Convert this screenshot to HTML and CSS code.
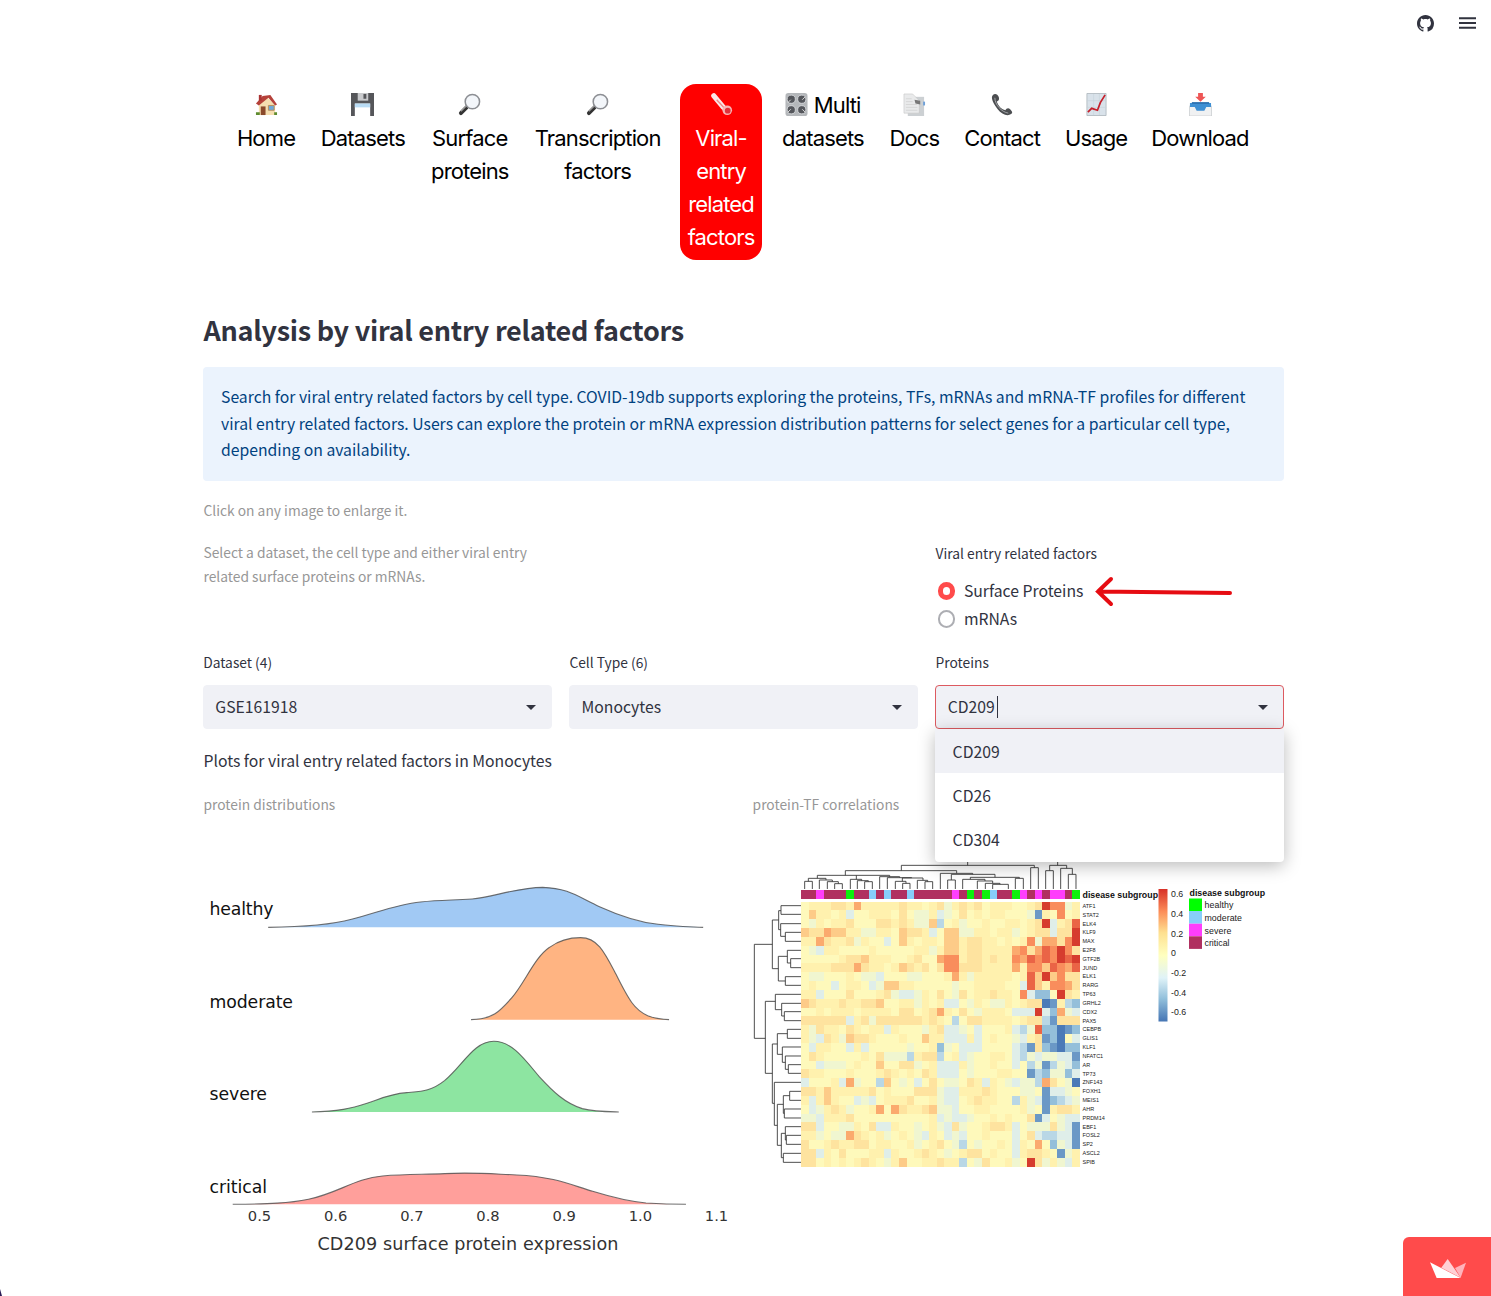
FILE: index.html
```html
<!DOCTYPE html>
<html lang="en">
<head>
<meta charset="utf-8">
<title>COVID-19db</title>
<link rel="stylesheet" href="styles.css">
</head>
<body>
<header class="toolbar">
  <svg class="github" viewBox="0 0 16 16"><path d="M8 0C3.58 0 0 3.58 0 8c0 3.54 2.29 6.53 5.47 7.59.4.07.55-.17.55-.38 0-.19-.01-.82-.01-1.49-2.01.37-2.53-.49-2.69-.94-.09-.23-.48-.94-.82-1.13-.28-.15-.68-.52-.01-.53.63-.01 1.08.58 1.23.82.72 1.21 1.87.87 2.33.66.07-.52.28-.87.51-1.07-1.78-.2-3.64-.89-3.64-3.95 0-.87.31-1.59.82-2.15-.08-.2-.36-1.02.08-2.12 0 0 .67-.21 2.2.82.64-.18 1.32-.27 2-.27s1.36.09 2 .27c1.53-1.04 2.2-.82 2.2-.82.44 1.1.16 1.92.08 2.12.51.56.82 1.27.82 2.15 0 3.07-1.87 3.75-3.65 3.95.29.25.54.73.54 1.48 0 1.07-.01 1.93-.01 2.2 0 .21.15.46.55.38A8.01 8.01 0 0 0 16 8c0-4.42-3.58-8-8-8z"/></svg>
  <svg class="burger" viewBox="0 0 18 12"><path d="M0 0h18v2H0zM0 5h18v2H0zM0 10h18v2H0z"/></svg>
</header>

<nav class="nav">
  <a class="item"><svg class="emoji" viewBox="0 0 24 24"><path fill="#f5deb0" d="M4 11l8-7 9 8v11H4z"/><path fill="#b5413a" d="M1 11L8 3l8-1 7 10-2 1-7-8-10 8z"/><path fill="#a33" d="M4 2h3v6H4z"/><path fill="#8b4a2b" d="M6 14h5v9H6z"/><path fill="#6fa9d8" stroke="#b98d5b" d="M14 13h6v5h-6z"/><path fill="#5e8c2f" d="M1 20h4v3H1zM20 20h3v3h-3z"/></svg><br>Home</a>
  <a class="item"><svg class="emoji" viewBox="0 0 24 24"><path fill="#55565a" d="M0 0h24v24H0z"/><path fill="#c9cacd" d="M7 0h11v8H7z"/><path fill="#55565a" d="M13 1h3v5h-3z"/><path fill="#fff" d="M4 11h16v13H4z"/><path fill="#b9dcf5" d="M4 11h16v4H4z"/></svg><br>Datasets</a>
  <a class="item"><svg class="emoji" viewBox="0 0 24 24"><path stroke="#333" stroke-width="4" stroke-linecap="round" d="M3 21l6-6"/><path stroke="#999" stroke-width="1.5" d="M3 19l6-6"/><circle cx="15" cy="9" r="7.5" fill="#f3f6fa" stroke="#8d8f94" stroke-width="1.6"/></svg><br>Surface<br>proteins</a>
  <a class="item"><svg class="emoji" viewBox="0 0 24 24"><path stroke="#333" stroke-width="4" stroke-linecap="round" d="M3 21l6-6"/><path stroke="#999" stroke-width="1.5" d="M3 19l6-6"/><circle cx="15" cy="9" r="7.5" fill="#f3f6fa" stroke="#8d8f94" stroke-width="1.6"/></svg><br>Transcription<br>factors</a>
  <a class="item active"><svg class="emoji" viewBox="0 0 24 24"><path stroke="#fbe9e9" stroke-width="5.500" stroke-linecap="round" d="M4 3l10 12"/><path stroke="#f08a8a" stroke-width="1.500" d="M7 7l10 11"/><circle cx="18" cy="18" r="5" fill="#f7b5b5"/><circle cx="18.500" cy="18.500" r="3" fill="#e0313b"/></svg><br>Viral-<br>entry<br>related<br>factors</a>
  <a class="item"><svg class="emoji" viewBox="0 0 24 24"><rect x=".5" y="0" width="23" height="24" rx="3" fill="#b4b7ba"/><g fill="#55575c" stroke="#d5d7da"><circle cx="6.500" cy="6.500" r="4.300"/><circle cx="17.500" cy="6.500" r="4.300"/><circle cx="6.500" cy="17.500" r="4.300"/><circle cx="17.500" cy="17.500" r="4.300"/></g><path stroke="#ddd" d="M6 7l-3 3M18 7l3-3M6 17l-3 3M18 17l3 3"/></svg> Multi<br>datasets</a>
  <a class="item"><svg class="emoji" viewBox="0 0 24 24"><path fill="#ccd0d3" d="M5 4h17v20H5z"/><path fill="#6ea0d8" d="M21 9h2v4h-2z"/><path fill="#e9eaeb" stroke="#c4c4c4" stroke-width=".6" d="M1 1h9l7 7v13H1z"/><path fill="#777" d="M12 7l6 1v4l-5-1z"/><path stroke="#c8c8c8" stroke-width=".6" d="M3 6h6M3 9h7M3 12h12M3 15h12M3 18h12"/></svg><br>Docs</a>
  <a class="item"><svg class="emoji" viewBox="0 0 24 24"><path fill="#4c4e51" d="M2 2c2-2 5-1 6 2s0 4-2 5c2 5 5 8 9 9 1-2 3-3 5-1s3 4 1 5c-4 3-10 0-14-5S-1 5 2 2z"/><path stroke="#a5a7aa" fill="none" d="M4 5c0 7 7 15 14 16"/></svg><br>Contact</a>
  <a class="item"><svg class="emoji" viewBox="0 0 24 24"><path fill="#d9e2ea" stroke="#a9b2b9" stroke-width=".8" d="M2 .5h20v23H2z"/><path stroke="#c6d1da" stroke-width=".6" d="M9 1v22M15 1v22M2 8h20M2 15h20"/><path fill="none" stroke="#c5202b" stroke-width="1.800" d="M3 20l4-4 6 2 3-8 5-8"/></svg><br>Usage</a>
  <a class="item"><svg class="emoji" viewBox="0 0 24 24"><path fill="#f0f1f2" stroke="#c3c6c9" stroke-width=".7" d="M.5 14l3-4h17l3 4v10H.5z"/><path fill="#3e8fd3" d="M1 10.500h22v4h-5l-2 4H8l-2-4H1z"/><path fill="#2d74b5" d="M3 9.500h18v2H3z"/><path fill="#ee5555" d="M9.500 0h5v4h3L12 9 6.500 4h3z"/></svg><br>Download</a>
</nav>

<main class="main">
  <h1 class="title">Analysis by viral entry related factors</h1>
  <div class="alert">Search for viral entry related factors by cell type. COVID-19db supports exploring the proteins, TFs, mRNAs and mRNA-TF profiles for different<br>viral entry related factors. Users can explore the protein or mRNA expression distribution patterns for select genes for a particular cell type,<br>depending on availability.</div>
  <p class="caption hint">Click on any image to enlarge it.</p>

  <section class="cols intro">
    <p class="caption">Select a dataset, the cell type and either viral entry<br>related surface proteins or mRNAs.</p>
    <div></div>
    <div class="radios">
      <p class="label">Viral entry related factors</p>
      <label class="radio on"><i></i><span>Surface Proteins</span></label>
      <label class="radio"><i></i><span>mRNAs</span></label>
      <svg class="arrow" viewBox="0 0 140 32"><path d="M3 15.500L135 17M16 3L3 15.500 16 28"/></svg>
    </div>
  </section>

  <section class="cols fields">
    <div>
      <p class="label">Dataset (4)</p>
      <div class="select"><span>GSE161918</span><b class="caret"></b></div>
    </div>
    <div>
      <p class="label">Cell Type (6)</p>
      <div class="select"><span>Monocytes</span><b class="caret"></b></div>
    </div>
    <div class="field-open">
      <p class="label">Proteins</p>
      <div class="select focus"><span>CD209</span><u class="cursor"></u><b class="caret"></b></div>
      <ul class="menu"><li class="hover">CD209</li><li>CD26</li><li>CD304</li></ul>
    </div>
  </section>

  <p class="plots">Plots for viral entry related factors in Monocytes</p>

  <section class="charts">
    <figure>
      <figcaption class="caption">protein distributions</figcaption>
      <svg class="chart" viewBox="203 830 532 440">
        <g class="density" transform="translate(200 860) scale(.3444 .3333)">
          <path fill="#a1c9f4" d="M198 202C300 201 380 195 440 178C520 156 570 134 640 126C700 120 730 121 790 117C850 112 920 82 995 82C1070 84 1100 112 1160 140C1220 168 1270 186 1330 193C1380 200 1420 200 1461 202"/>
          <path fill="#ffb482" d="M787 479C850 478 870 455 905 414C945 366 970 294 1015 262C1040 243 1070 233 1105 233C1155 233 1175 278 1208 343C1245 420 1262 450 1300 467C1322 476 1340 478 1362 479"/>
          <path fill="#8de5a1" d="M325 756C400 755 440 745 485 730C525 716 550 702 600 698C640 694 670 695 710 662C765 614 795 544 853 544C905 544 940 594 985 650C1025 695 1060 730 1110 746C1145 755 1175 755 1216 756"/>
          <path fill="#ff9f9b" d="M95 1033C200 1032 260 1030 315 1018C400 1000 450 955 530 948C600 942 650 944 710 941C790 936 850 942 920 945C1030 950 1080 976 1140 994C1200 1013 1240 1024 1295 1029C1340 1032 1370 1033 1411 1033"/>
        </g>
        <g class="density-name">
          <text x="209.500" y="915" textLength="64">healthy</text>
          <text x="209.500" y="1007.600" textLength="83.500">moderate</text>
          <text x="209.500" y="1100" textLength="57.500">severe</text>
          <text x="209.500" y="1192.600" textLength="57.500">critical</text>
        </g>
        <g class="tick">
          <text x="259.500" y="1221">0.5</text><text x="335.700" y="1221">0.6</text><text x="411.900" y="1221">0.7</text><text x="488" y="1221">0.8</text><text x="564.200" y="1221">0.9</text><text x="640.400" y="1221">1.0</text><text x="716.500" y="1221">1.1</text>
        </g>
        <text class="axis" x="317.500" y="1250" textLength="301">CD209 surface protein expression</text>
      </svg>
    </figure>
    <figure>
      <figcaption class="caption">protein-TF correlations</figcaption>
      <svg class="chart" viewBox="753 830 532 440">
        <defs><linearGradient id="scale" x1="0" y1="0" x2="0" y2="1">
          <stop offset="0" stop-color="#d73027"/><stop offset=".17" stop-color="#fc8d59"/><stop offset=".33" stop-color="#fee090"/><stop offset=".5" stop-color="#ffffbf"/><stop offset=".67" stop-color="#e0f3f8"/><stop offset=".83" stop-color="#91bfdb"/><stop offset="1" stop-color="#4575b4"/>
        </linearGradient></defs>
        <g class="tree" transform="translate(745 855) scale(.33333)">
          <path d="M668 20V31M469 47V31H868V38M301 61V47H635V55M217 70V61H434V65M190 79V70H243V75M179 102V79H202V102M223 102V75H262V80M247 102V80H280V86M269 102V86H292V102M334 61V73M316 102V73H350V77M337 102V77H370V80M359 102V80H382V102M404 102V65H464V68M427 102V68H500V69M472 79V69H534V76M451 102V79H483V85M473 102V85H495V102M517 102V76H548V80M540 102V80H563V102"/>
          <path d="M586 102V55H683V58M619 75V58H750V67M608 102V75H631V102M676 73V67H823V70M811 102V70H835V102M653 102V73H720V78M697 102V78H743V85M721 102V85H765V88M743 102V88H790V102M857 102V38H880V102M938 20V31M914 47V31H965V40M902 102V47H925V102M947 102V40H982V58M970 102V58H993V102"/>
          <path d="M82 268H28V550H61M101 195H82V341H100M108 167H101V224H107M168 152H108V178H168M168 206H107V244H121M168 232H121V259H168M127 304H100V378H121M168 286H127V324H137M168 311H137V338H168M168 365H121V391H168M91 439H61V655H82M168 418H91V464H110M168 445H110V483H118M168 470H118V497H168M97 567H82V745H88M127 536H97V598H112M168 523H127V550H168M168 576H112V622H121M168 603H121V643H130M168 629H130V655H168M168 682H88V811H97M115 748H97V871H109M134 722H115V775H118M168 709H134V736H168M168 762H118V789H168M121 835H109V908H115M168 815H121V855H124M168 841H124V868H168M168 895H115V922H168"/>
        </g>
        <g id="heatmap" shape-rendering="crispEdges"></g>
        <g id="genes" class="gene"></g>
        <text class="legend-title" x="1082.500" y="898" textLength="75.500">disease subgroup</text>
        <rect x="1158.500" y="889" width="9" height="132.500" fill="url(#scale)"/>
        <g class="legend">
          <text x="1171" y="897">0.6</text><text x="1171" y="916.500">0.4</text><text x="1171" y="936.500">0.2</text><text x="1171" y="956">0</text><text x="1171" y="975.500">-0.2</text><text x="1171" y="995.500">-0.4</text><text x="1171" y="1015">-0.6</text>
          <text x="1204.500" y="908" textLength="29">healthy</text><text x="1204.500" y="921" textLength="37.500">moderate</text><text x="1204.500" y="933.500" textLength="27">severe</text><text x="1204.500" y="946" textLength="25">critical</text>
        </g>
        <text class="legend-title" x="1189.500" y="895.500" textLength="75.500">disease subgroup</text>
        <path fill="#0f0" d="M1189 898.500h13v12.500h-13z"/><path fill="#87cefa" d="M1189 911h13v12.700h-13z"/><path fill="#ff3efc" d="M1189 923.700h13v12.600h-13z"/><path fill="#b03060" d="M1189 936.300h13v12.600h-13z"/>
      </svg>
    </figure>
  </section>
</main>

<div class="badge"><svg viewBox="0 0 108 57"><path fill="#ffb3bb" d="M75 27L108 11 92 56z"/><path fill="#ffd0d5" d="M34 26L53 0 92 56z"/><path fill="#fff" d="M0 10L92 57H20z"/></svg></div>
<div class="corner"></div>
<script src="script.js"></script>
</body>
</html>
```
FILE: styles.css
```css
* { box-sizing: border-box; }
body { margin: 0; height: 1296px; position: relative; overflow: hidden; background: #fff; color: #31333f; font-family: "Noto Sans CJK JP", "Noto Sans CJK SC", sans-serif; font-size: 15.75px; }
p, figure, h1, ul { margin: 0; padding: 0; }

.toolbar { height: 84px; padding: 15px 15.5px 0 0; display: flex; justify-content: flex-end; align-items: flex-start; gap: 24.5px; fill: #31333f; }
.github { width: 17px; height: 17px; }
.burger { width: 17px; height: 12px; margin-top: 2px; }

.nav { display: grid; grid-template-columns: 58px 85px 78px 127px 69px 84px 48px 77px 60px 97px; column-gap: 25.4px; margin-left: 237px; height: 176px; font: 22px/33px Inter, sans-serif; letter-spacing: -0.85px; color: #000; text-align: center; white-space: nowrap; }
.item { padding: 5px 0; display: block; margin: 0 -6.3px; height: 176px; border-radius: 16px; }
.item.active { background: #f00; color: #fff; }
.emoji { width: 23px; height: 23px; vertical-align: -3px; fill: none; }

.main { width: 1081px; margin-left: 203px; }
.title { font-size: 27px; line-height: 40px; font-weight: 600; letter-spacing: -0.27px; margin-top: 50px; padding-left: .5px; white-space: nowrap; }
.alert { margin-top: 17px; height: 114px; padding: 17px 18px; background: #ebf3fd; color: #004280; border-radius: 4px; line-height: 26.6px; white-space: nowrap; }
.caption { color: #979797; font-size: 13.8px; line-height: 24px; white-space: nowrap; padding-left: .5px; }
.charts figure + figure .caption { padding-left: 0; }
.hint { margin-top: 17px; }

.cols { display: grid; grid-template-columns: repeat(3, 1fr); column-gap: 17.6px; }
.intro { margin-top: 18px; height: 110px; }
.label { font-size: 13.8px; line-height: 24px; padding-left: .2px; }
.radios { position: relative; }
.radios .label { margin-bottom: 12px; padding-top: 1px; }
.radio { display: flex; align-items: center; height: 28px; gap: 8.5px; padding-left: 2.5px; }
.radio span { margin-top: -2px; }
.radio i { width: 17.5px; height: 17.5px; border-radius: 50%; border: 2px solid #adaeb3; background: #fff; }
.radio.on i { border: 5.5px solid #ff4b4b; }
.arrow { position: absolute; left: 160px; top: 36px; width: 140px; height: 32px; fill: none; stroke: #e60c12; stroke-width: 4; stroke-linecap: round; }

.select { margin-top: 11px; height: 44px; border-radius: 4px; background: #f0f1f6; border: 1px solid #f0f1f6; padding: 0 15px 0 11.3px; display: flex; align-items: center; }
.select span { margin-top: -2px; }
.select.focus { border-color: #dd5a60; }
.caret { margin-left: auto; border: 5.5px solid transparent; border-top: 5.5px solid #31333f; border-bottom: 0; }
.cursor { width: 1px; height: 22px; background: #31333f; margin-left: 2.3px; }
.field-open { position: relative; }
.menu { position: absolute; left: 0; right: 0; top: 79px; list-style: none; background: #fff; box-shadow: 0 4px 17px rgba(0,0,0,.27); border-radius: 0 0 4px 4px; z-index: 2; }
.menu li { height: 44.2px; padding-left: 17.2px; line-height: 45px; }
.menu .hover { background: #f0f1f6; }

.plots { margin-top: 19px; line-height: 26px; padding-left: .5px; }
.charts { margin-top: 18px; display: grid; grid-template-columns: 1fr 1fr; column-gap: 17.6px; }
.chart { display: block; width: 532px; height: 440px; margin-top: 14px; }
.density path { stroke: #4b4b4b; stroke-width: 1.1; stroke-opacity: .8; vector-effect: non-scaling-stroke; }
.density-name { font: 17.3px "DejaVu Sans", sans-serif; fill: #111; }
.tick { font: 14.7px "DejaVu Sans", sans-serif; fill: #333; text-anchor: middle; }
.axis { font: 17.6px "DejaVu Sans", sans-serif; fill: #333; }
.tree path { fill: none; stroke: #333; stroke-width: 2.6; }
.gene { font: 5.5px "Liberation Sans", sans-serif; fill: #222; }
.legend { font: 8.8px "Liberation Sans", sans-serif; fill: #222; }
.legend-title { font: bold 8.8px "Liberation Sans", sans-serif; fill: #111; }

.badge { position: absolute; right: 0; bottom: 0; width: 88px; height: 59px; border-radius: 6px 0 0 0; background: #ff4b4b; padding: 22px 0 0 27px; }
.badge svg { display: block; width: 36px; height: 19px; }
.corner { position: absolute; left: 0; bottom: 0; width: 2px; height: 7px; background: #2b1c55; clip-path: polygon(0 0, 100% 100%, 0 100%); }
```
FILE: script.js
```js
// Colour steps from strong negative (0) to strong positive (d) correlation.
const palette = { 0: '#4b7ab7', 1: '#6b98c6', 2: '#94bfda', 3: '#b9d7e6', 4: '#dfeee9', 5: '#f0f6d0', 6: '#fef9bb', 7: '#fff1ae', 8: '#fee39f', 9: '#fdcb88', a: '#fbaa6e', b: '#f98d5c', c: '#ea6446', d: '#d63c2e' };
const rows = [
  ['ATF1',   '6777887a7777787767', '85787867776678dbb57'],
  ['STAT2',  '697767466777686557', '4568676776665176b67'],
  ['ELK4',   '657677866688787559', '36756676677678d478c'],
  ['KLF9',   '988a99775577698874', '699557767756788488d'],
  ['MAX',    '77a877857664697677', '699788776767b5aa8bd'],
  ['E2F8',   '654776666766666775', '7997887777ab8acbdb8'],
  ['GTF2B',  '666667889777667866', 'abb7887877bacbcbdcd'],
  ['JUND',   '7777888a8776798786', '8bb8887777a7bb9cbac'],
  ['ELK1',   '655666765546665566', '67a757777767c9d9b88'],
  ['RARG',   '676646776459977666', '665667777664c97bba8'],
  ['TP63',   '774666866678544576', '86586778776b4226d87'],
  ['GRHL2',  '987778778896677576', '7446576557678801732'],
  ['CDX2',   '667677767777688678', 'a768657776444d42a54'],
  ['PAX5',   '888888478588888878', '7636887777678831888'],
  ['CEBPB',  '758776876774766657', '8445646667435c22012'],
  ['GLIS1',  '754875988766676697', '7444746766547812064'],
  ['KLF1',   '647766474666665667', '2564446666431821022'],
  ['NFATC1', '687666667685553788', '3674566776435455441'],
  ['AR',     '664555676696688567', '4447566766463513542'],
  ['TP73',   '877666766678767687', '4446566677661325524'],
  ['ZNF143', '466674a56639656468', '65568747654553a8650'],
  ['FOXH1',  '887977777867666888', '5447778766655614456'],
  ['MEIS1',  '747976645467778667', '5446787766375412345'],
  ['AHR',    '6457875667a6a87789', '5546677666675617887'],
  ['PRDM14', '554777866666666667', '4544566767668146544'],
  ['EBF1',   '884665576844766567', '5485667887465558541'],
  ['FOSL2',  '775655a87675676547', '6454667666468433441'],
  ['SP2',    '866787788677667567', '8653656676476a62541'],
  ['ASCL2',  '884768666774766787', '6567886766478876157'],
  ['SPIB',   '886767678765796677', '877365866756d857547']
];
const groups = 'MMSMMMGMMBMBMMBMMMMMSMGMGBMMGSMSMSSMG';
const groupColor = { M: '#b03060', S: '#ff3efc', G: '#0df00d', B: '#87cefa' };
const W = 279 / 37, H = 265 / 30;
const rect = (x, y, w, h, fill) => `<rect x="${x.toFixed(2)}" y="${y.toFixed(2)}" width="${w}" height="${h}" fill="${fill}"/>`;
let cells = '', names = '';
[...groups].forEach((g, i) => { cells += rect(801 + i * W, 890, W, 9, groupColor[g]); });
rows.forEach(([name, left, right], r) => {
  [...(left + right)].forEach((v, c) => { cells += rect(801 + c * W, 901.5 + r * H, W, H, palette[v]); });
  names += `<text x="1082.5" y="${(907.8 + r * 8.83).toFixed(1)}">${name}</text>`;
});
document.getElementById('heatmap').innerHTML = cells;
document.getElementById('genes').innerHTML = names;
```
